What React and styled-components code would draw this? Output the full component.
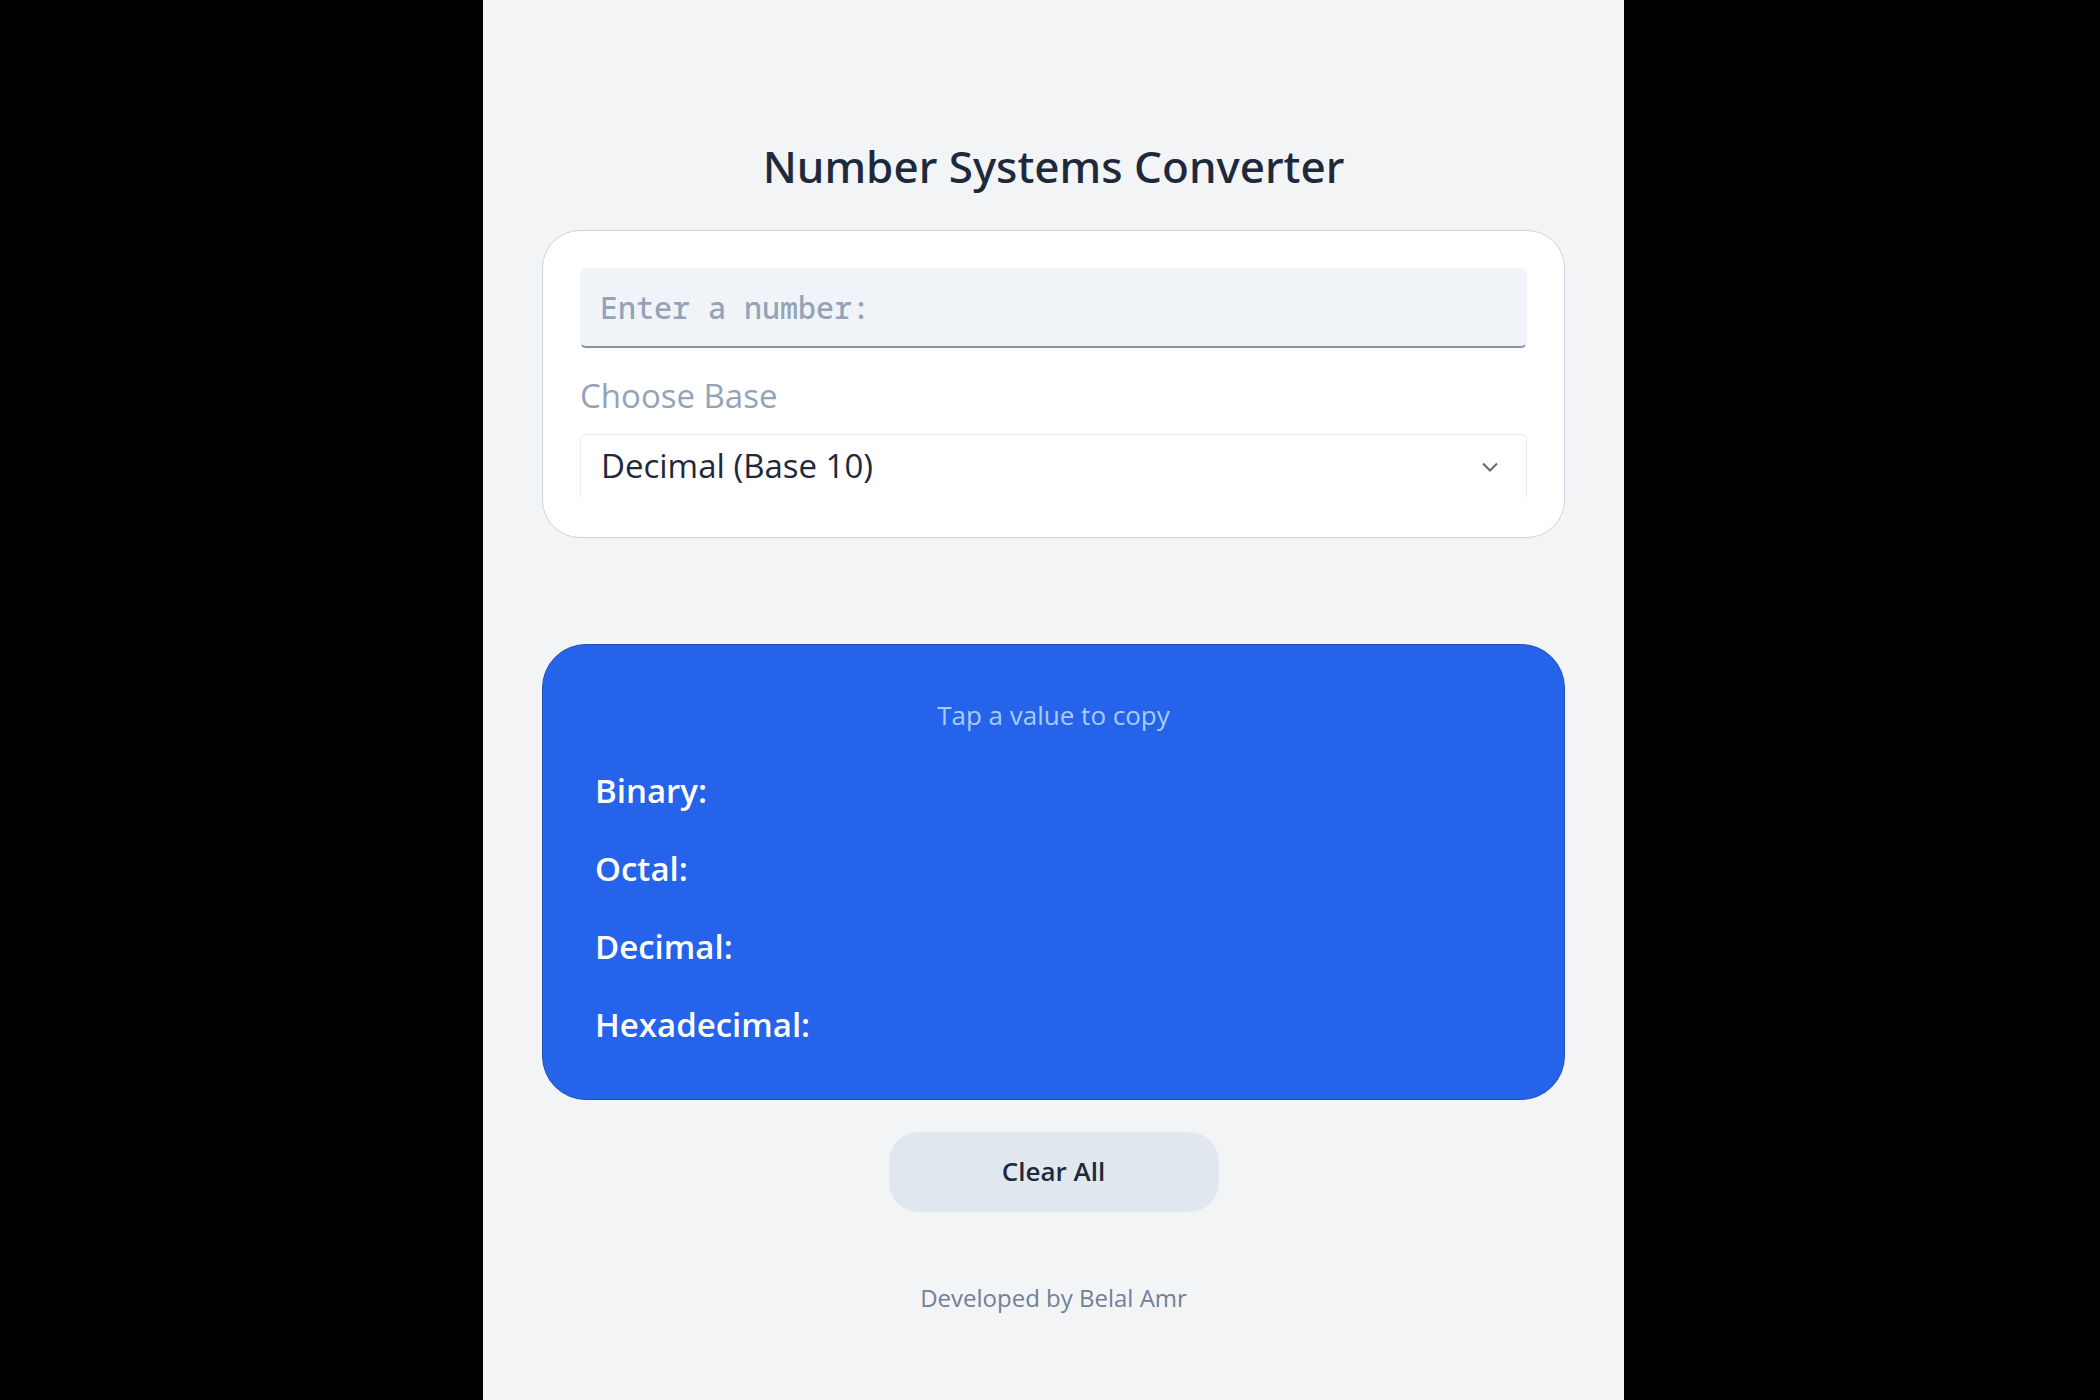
import React, { useState } from 'react';
import styled, { createGlobalStyle } from 'styled-components';

const GlobalStyle = createGlobalStyle`
  *, *::before, *::after { box-sizing: border-box; }
  body {
    margin: 0;
    background: #000;
    color: #1e293b;
    font-family: "Open Sans", "Noto Sans", sans-serif;
  }
  button, input, select { font: inherit; color: inherit; }
`;

const Page = styled.div`
  display: grid;
  grid-template-columns: 483fr 1141fr 476fr;
  min-height: 100vh;
`;

const Panel = styled.main`
  grid-column: 2;
  display: flex;
  flex-direction: column;
  padding: 136px 59px 72px;
  background: #f2f4f6;
`;

const Title = styled.h1`
  margin: 0 0 34px;
  font-family: "Noto Sans", sans-serif;
  font-size: 44px;
  line-height: 60px;
  font-weight: 500;
  text-align: center;
`;

const FormCard = styled.form`
  display: flex;
  flex-direction: column;
  padding: 37px;
  border: 1px solid #cbd5e1;
  border-radius: 38px;
  background: #fff;
`;

const NumberInput = styled.input`
  width: 100%;
  height: 80px;
  padding: 0 19px;
  border: 1px solid #eef1f5;
  border-bottom: 2px solid #8d9299;
  border-radius: 6px;
  background: #f0f4f9;
  font-family: "Noto Sans Mono", "DejaVu Sans Mono", monospace;
  font-size: 30px;
  font-weight: 500;
  outline: none;
  &::placeholder { color: #94a3b8; opacity: 1; }
`;

const BaseLabel = styled.label`
  margin: 24px 0 14px;
  font-size: 33px;
  line-height: 48px;
  color: #94a3b8;
`;

const SelectBox = styled.div`
  position: relative;
  display: flex;
  align-items: center;
`;

const BaseSelect = styled.select`
  appearance: none;
  width: 100%;
  height: 66px;
  padding: 0 64px 4px 20px;
  border: 1px solid #eaebee;
  border-bottom: 0;
  border-radius: 6px;
  background: #fff;
  font-size: 33px;
  outline: none;
`;

const Chevron = styled.svg`
  position: absolute;
  right: 28px;
  width: 18px;
  height: 12px;
  pointer-events: none;
`;

const ResultCard = styled.section`
  display: flex;
  flex-direction: column;
  margin-top: 106px;
  padding: 50px 52px 36px;
  border: 1px solid #2450b0;
  border-radius: 44px;
  background: #2563eb;
  color: #fff;
`;

const Hint = styled.p`
  margin: 0 0 16px;
  font-size: 26px;
  line-height: 40px;
  text-align: center;
  color: #a9cbfb;
`;

const ResultRow = styled.button`
  height: 78px;
  padding: 0;
  border: 0;
  background: none;
  color: #fff;
  font-size: 33px;
  font-weight: 600;
  text-align: left;
  cursor: pointer;
`;

const ClearButton = styled.button`
  align-self: center;
  width: 330px;
  height: 80px;
  margin-top: 32px;
  padding: 0 0 2px;
  border: 0;
  border-radius: 30px;
  background: #e1e7ef;
  font-size: 26px;
  font-weight: 600;
  cursor: pointer;
`;

const Footer = styled.footer`
  margin-top: 68px;
  font-size: 24px;
  line-height: 36px;
  text-align: center;
  color: #718096;
`;

const BASES = [
  { name: 'Binary', base: 2 },
  { name: 'Octal', base: 8 },
  { name: 'Decimal', base: 10 },
  { name: 'Hexadecimal', base: 16 },
];

export default function App() {
  const [value, setValue] = useState('');
  const [base, setBase] = useState(10);
  const parsed = parseInt(value, base);
  const show = (target) =>
    Number.isNaN(parsed) ? '' : ` ${parsed.toString(target).toUpperCase()}`;
  const copy = (target) => navigator.clipboard?.writeText(show(target).trim());

  return (
    <>
      <GlobalStyle />
      <Page>
        <Panel>
          <Title>Number Systems Converter</Title>
          <FormCard onSubmit={(e) => e.preventDefault()}>
            <NumberInput
              type="text"
              aria-label="Enter a number:"
              placeholder="Enter a number:"
              value={value}
              onChange={(e) => setValue(e.target.value)}
            />
            <BaseLabel htmlFor="base">Choose Base</BaseLabel>
            <SelectBox>
              <BaseSelect
                id="base"
                value={base}
                onChange={(e) => setBase(Number(e.target.value))}
              >
                {BASES.map((b) => (
                  <option key={b.base} value={b.base}>
                    {`${b.name} (Base ${b.base})`}
                  </option>
                ))}
              </BaseSelect>
              <Chevron viewBox="0 0 18 12" fill="none" aria-hidden="true">
                <path d="M2 2.5 9 9.5 16 2.5" stroke="#666" strokeWidth="2" />
              </Chevron>
            </SelectBox>
          </FormCard>
          <ResultCard>
            <Hint>Tap a value to copy</Hint>
            {BASES.map((b) => (
              <ResultRow key={b.base} type="button" onClick={() => copy(b.base)}>
                {b.name}:{show(b.base)}
              </ResultRow>
            ))}
          </ResultCard>
          <ClearButton type="button" onClick={() => setValue('')}>
            Clear All
          </ClearButton>
          <Footer>Developed by Belal Amr</Footer>
        </Panel>
      </Page>
    </>
  );
}
